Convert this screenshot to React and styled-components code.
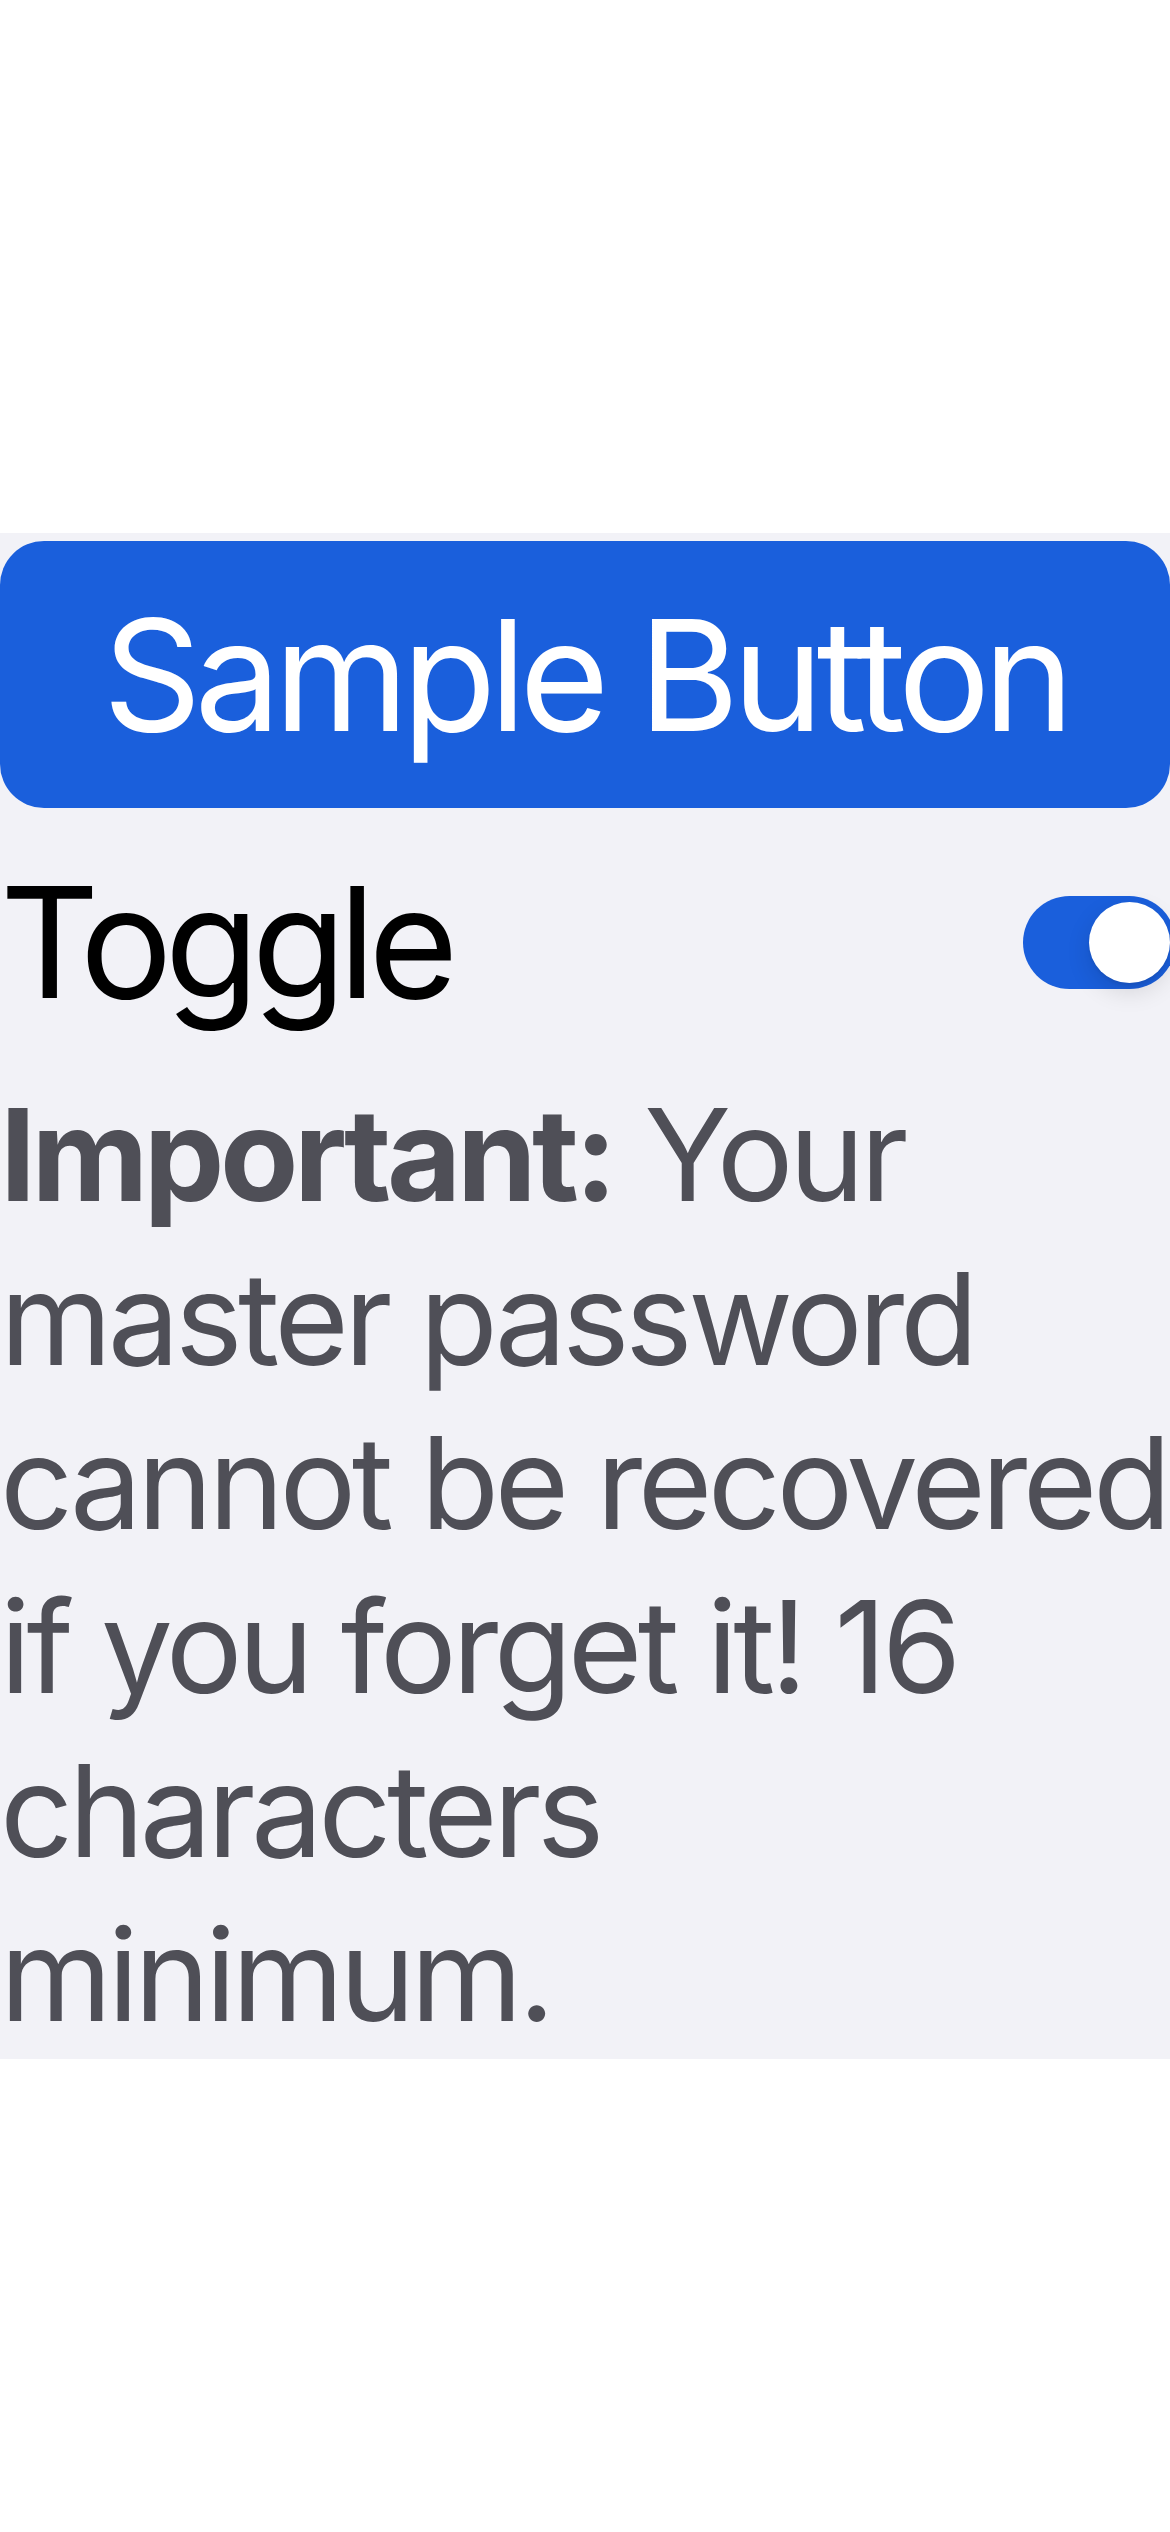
import styled, { createGlobalStyle } from "styled-components";
import { useState } from "react";

const GlobalStyle = createGlobalStyle`
  html, body {
    margin: 0;
    padding: 0;
    background: #ffffff;
  }
  body {
    font-family: Inter, "Noto Sans", "Liberation Sans", sans-serif;
    -webkit-font-smoothing: antialiased;
  }
`;

export default function App() {
  const [on, setOn] = useState(true);

  return (
    <>
      <GlobalStyle />
      <Page>
        <Panel>
          <SampleButton type="button">Sample Button</SampleButton>

          <ToggleRow>
            <ToggleLabel>Toggle</ToggleLabel>
            <Switch
              type="button"
              role="switch"
              aria-checked={on}
              $on={on}
              onClick={() => setOn(!on)}
            >
              <Knob $on={on} />
            </Switch>
          </ToggleRow>

          <Notice>
            <strong>Important:</strong> Your master password cannot be
            recovered if you forget it! 16 characters minimum.
          </Notice>
        </Panel>
      </Page>
    </>
  );
}

const Page = styled.div`
  width: 1170px;
  min-height: 2532px;
  background: #ffffff;
  overflow: hidden;
  padding-top: 533px;
  box-sizing: border-box;
`;

const Panel = styled.section`
  background: #f2f2f7;
  display: flex;
  flex-direction: column;
  padding: 8px 0 2px;
`;

const SampleButton = styled.button`
  height: 267px;
  width: 100%;
  border: none;
  border-radius: 44px;
  background: #1a5fdc;
  color: #ffffff;
  font-family: Inter, "Noto Sans", sans-serif;
  font-size: 154px;
  font-weight: 400;
  letter-spacing: -7px;
  display: flex;
  align-items: center;
  justify-content: center;
  padding: 0;
  cursor: pointer;
`;

const ToggleRow = styled.div`
  display: flex;
  align-items: center;
  justify-content: space-between;
  margin-top: 41px;
`;

const ToggleLabel = styled.span`
  font-size: 154px;
  line-height: 186px;
  color: #000000;
  letter-spacing: -7.5px;
`;

const Switch = styled.button`
  position: relative;
  flex: none;
  width: 153px;
  height: 93px;
  margin-right: -6px;
  border: none;
  padding: 0;
  border-radius: 47px;
  background: ${({ $on }) => ($on ? "#1a5fdc" : "#e5e5ea")};
  cursor: pointer;
`;

const Knob = styled.span`
  position: absolute;
  top: 6px;
  left: ${({ $on }) => ($on ? "66px" : "6px")};
  width: 81px;
  height: 81px;
  border-radius: 50%;
  background: #ffffff;
  box-shadow: 0 9px 24px rgba(0, 0, 0, 0.12), 0 3px 3px rgba(0, 0, 0, 0.06);
`;

const Notice = styled.p`
  margin: 38px 0 0;
  font-size: 128px;
  line-height: 164px;
  color: #4f4f57;
  letter-spacing: -4.5px;
  word-spacing: 0;

  strong {
    font-weight: 700;
  }
`;
